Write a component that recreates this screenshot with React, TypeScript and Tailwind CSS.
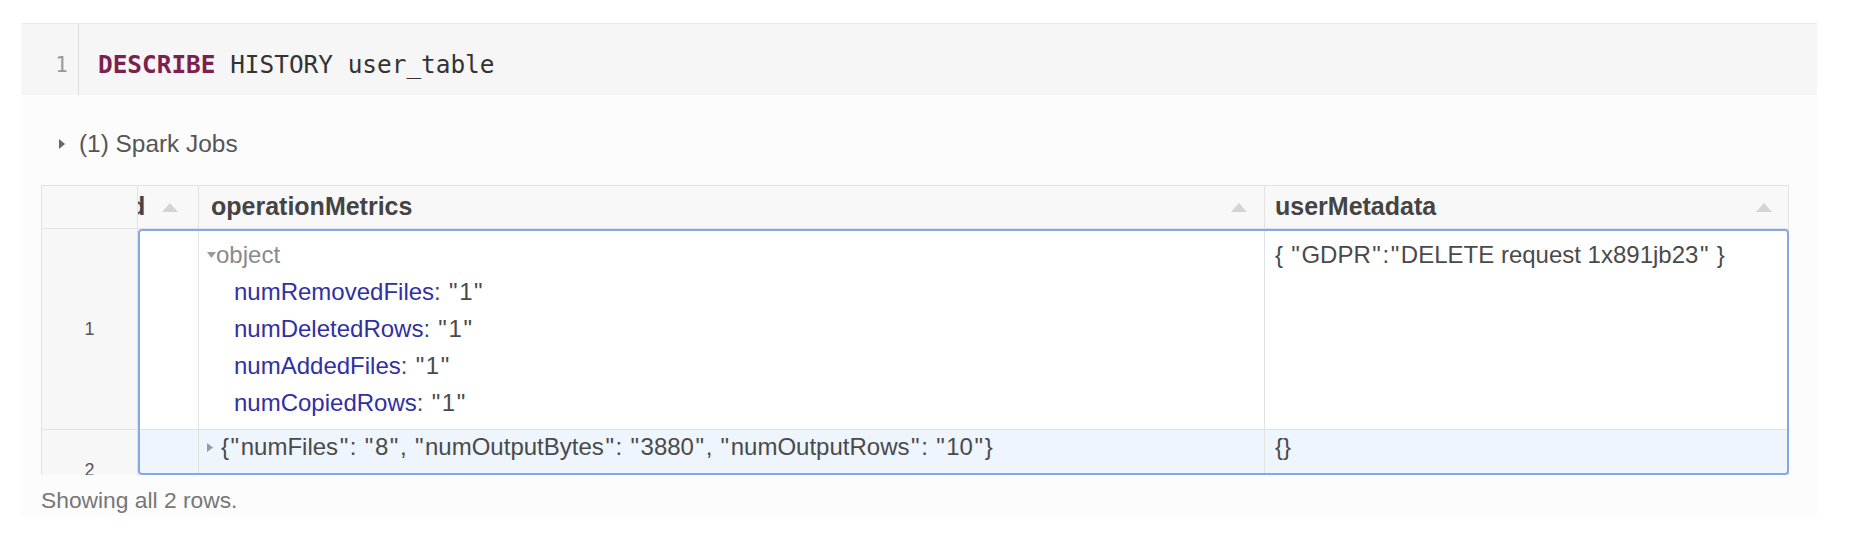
import React from "react";

const metrics = [
  ["numRemovedFiles", "1"],
  ["numDeletedRows", "1"],
  ["numAddedFiles", "1"],
  ["numCopiedRows", "1"],
];

// the quotes in the output sit a little apart from their neighbours
const quoted = (s: string) =>
  s.split('"').map((part, i) => (
    <React.Fragment key={i}>
      {i > 0 && <span className="px-[1.6px]">"</span>}
      {part}
    </React.Fragment>
  ));

const SortArrow = () => (
  <svg width="16" height="9" viewBox="0 0 16 9" className="shrink-0">
    <path d="M8 0 L16 9 L0 9 Z" fill="#d4d4d4" />
  </svg>
);

const Caret = ({ down }: { down?: boolean }) =>
  down ? (
    <svg width="9" height="6" viewBox="0 0 9 6" className="shrink-0">
      <path d="M0 0 L9 0 L4.5 6 Z" fill="#9a9a9a" />
    </svg>
  ) : (
    <svg width="6" height="9" viewBox="0 0 6 9" className="shrink-0">
      <path d="M0 0 L6 4.5 L0 9 Z" fill="#9a9a9a" />
    </svg>
  );

export default function App() {
  return (
    <div className="w-[1852px] h-[539px] bg-white overflow-hidden font-['Liberation_Sans',Arial,sans-serif]">
      <div className="ml-[21px] pt-[23px] w-[1796px]">
        {/* Code cell */}
        <div className="h-[72px] flex bg-[#f6f6f6] border-t border-[#ececec]">
          <div className="w-[58px] border-r border-[#dcdcdc] flex items-center justify-end pr-[10px] pt-[12px] font-['DejaVu_Sans_Mono',monospace] text-[21px] text-[#999]">
            1
          </div>
          <div className="pl-[19px] pt-[12px] flex items-center font-['DejaVu_Sans_Mono',monospace] text-[24.4px] text-[#333] whitespace-pre">
            <span className="font-bold text-[#7d1f4f]">DESCRIBE</span> HISTORY user_table
          </div>
        </div>

        <div className="bg-[#fcfcfc] h-[421px] pt-[36px]">
          {/* Spark jobs */}
          <div className="h-[26px] flex items-center pl-[38px] gap-[14px] text-[24.4px] text-[#555]">
            <svg width="6" height="10" viewBox="0 0 6 10" className="shrink-0">
              <path d="M0 0 L6 5 L0 10 Z" fill="#666" />
            </svg>
            <span>(1) Spark Jobs</span>
          </div>

          {/* Table */}
          <div className="ml-[20px] mt-[28px] w-[1748px]">
            {/* header */}
            <div className="flex h-[44px] bg-[#f8f8f8] border border-[#e2e2e2] text-[25px] font-bold text-[#444]">
              <div className="w-[96px] border-r border-[#e2e2e2]" />
              <div className="w-[61px] border-r border-[#e2e2e2] flex items-center overflow-hidden">
                <span className="-ml-[8px]">d</span>
                <span className="ml-[17px]">
                  <SortArrow />
                </span>
              </div>
              <div className="w-[1066px] border-r border-[#e2e2e2] flex items-center justify-between pl-[12px] pr-[17px]">
                <span>operationMetrics</span>
                <SortArrow />
              </div>
              <div className="flex-1 flex items-center justify-between pl-[10px] pr-[16px]">
                <span>userMetadata</span>
                <SortArrow />
              </div>
            </div>

            {/* body */}
            <div className="relative h-[246px] overflow-hidden text-[24px] text-[#4a4a4a]">
              <div className="flex h-[201px]">
                <div className="w-[97px] bg-[#f7f7f7] border-l border-r border-b border-[#e2e2e2] flex items-center justify-center text-[18px] text-[#555]">
                  1
                </div>
                <div className="w-[61px] bg-white border-r border-b border-[#e2e2e2]" />
                <div className="w-[1066px] bg-white border-r border-b border-[#e2e2e2] pl-[8px] pt-[7px] leading-[37px]">
                  <div className="flex items-center">
                    <Caret down />
                    <span className="text-[#8a8a8a]">object</span>
                  </div>
                  {metrics.map(([k, v]) => (
                    <div key={k} className="pl-[27px]">
                      <span className="text-[#3130a3]">{k}</span>
                      {quoted(`: "${v}"`)}
                    </div>
                  ))}
                </div>
                <div className="flex-1 bg-white border-r border-b border-[#e2e2e2] pl-[10px] pt-[7px] leading-[37px]">
                  {quoted('{ "GDPR":"DELETE request 1x891jb23" }')}
                </div>
              </div>
              <div className="flex h-[80px]">
                <div className="w-[97px] bg-[#f7f7f7] border-l border-r border-[#e2e2e2] flex items-center justify-center text-[18px] text-[#555]">
                  2
                </div>
                <div className="w-[61px] bg-[#eef5fd] border-r border-[#e2e2e2]" />
                <div className="w-[1066px] bg-[#eef5fd] border-r border-[#e2e2e2] pl-[8px] pt-[2px] leading-[30px] flex items-start gap-[8px]">
                  <span className="h-[30px] flex items-center">
                    <Caret />
                  </span>
                  <span>{quoted('{"numFiles": "8", "numOutputBytes": "3880", "numOutputRows": "10"}')}</span>
                </div>
                <div className="flex-1 bg-[#eef5fd] border-r border-[#e2e2e2] pl-[10px] pt-[2px] leading-[30px]">
                  {"{}"}
                </div>
              </div>
              {/* selection outline */}
              <div className="absolute left-[97px] top-0 w-[1651px] h-[246px] border-2 border-[#86a6e8] rounded-[4px] pointer-events-none" />
            </div>

            <div className="mt-[12px] h-[26px] flex items-center text-[22.8px] text-[#777]">
              Showing all 2 rows.
            </div>
          </div>
        </div>
      </div>
    </div>
  );
}
